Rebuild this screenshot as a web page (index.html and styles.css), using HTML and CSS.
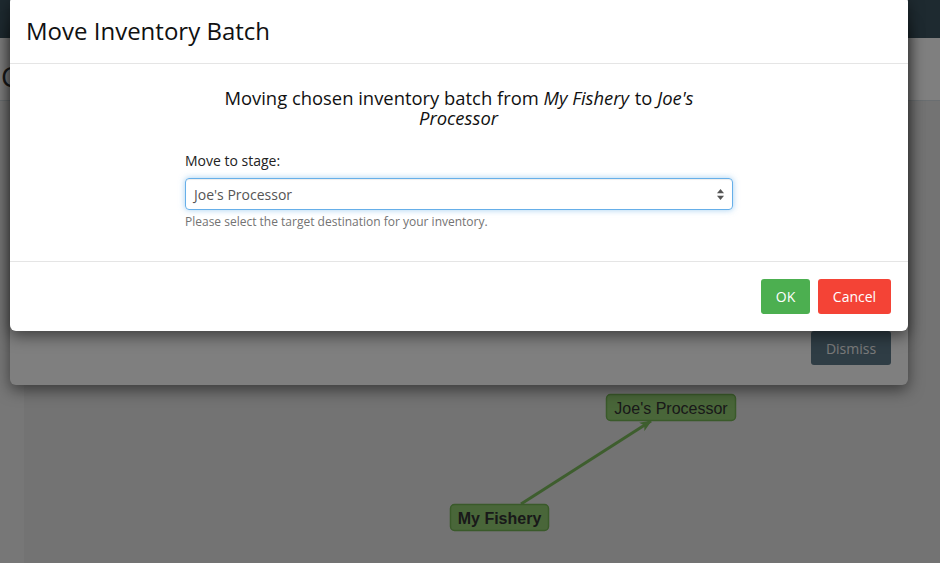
FILE: index.html
```html
<!DOCTYPE html>
<html lang="en">
<head>
<meta charset="utf-8">
<title>Move Inventory Batch</title>
<link rel="stylesheet" href="styles.css">
</head>
<body>
<div class="app">
  <header class="navbar"></header>
  <div class="page-header"><h1 class="page-title">Chain of Custody</h1></div>
  <div class="main">
    <aside class="sidebar"></aside>
    <section class="canvas">
      <svg class="graph" width="916" height="462" viewBox="0 0 916 462">
        <defs>
          <marker id="arrow" markerWidth="12" markerHeight="10" refX="11" refY="5" orient="auto" markerUnits="userSpaceOnUse">
            <path d="M0,0 L12,5 L0,10 L3,5 Z" fill="#7cbc5c"/>
          </marker>
        </defs>
        <line x1="497" y1="403" x2="627" y2="320" stroke="#7cbc5c" stroke-width="3" marker-end="url(#arrow)"/>
        <rect x="582.5" y="293.5" width="129" height="26" rx="4" class="node"/>
        <text x="647" y="313" class="node-label">Joe's Processor</text>
        <rect x="426.5" y="403.5" width="98" height="26" rx="4" class="node"/>
        <text x="475.5" y="423" class="node-label bold">My Fishery</text>
      </svg>
    </section>
  </div>
</div>

<div class="modal back-modal">
  <div class="back-footer">
    <button class="btn btn-dismiss" type="button">Dismiss</button>
  </div>
</div>

<div class="backdrop"></div>

<div class="modal front-modal">
  <div class="modal-header">
    <h2 class="modal-title">Move Inventory Batch</h2>
  </div>
  <div class="modal-body">
    <div class="form-col">
      <p class="lead">Moving chosen inventory batch from <em>My Fishery</em> to <em>Joe's Processor</em></p>
      <label class="field-label">Move to stage:</label>
      <div class="select">
        <span class="select-value">Joe's Processor</span>
        <svg class="select-arrows" width="7" height="11" viewBox="0 0 7 11">
          <path d="M3.5 0 L7 4.2 L0 4.2 Z" fill="#555"/>
          <path d="M3.5 11 L7 6.8 L0 6.8 Z" fill="#555"/>
        </svg>
      </div>
      <p class="help">Please select the target destination for your inventory.</p>
    </div>
  </div>
  <div class="modal-footer">
    <button class="btn btn-ok" type="button">OK</button>
    <button class="btn btn-cancel" type="button">Cancel</button>
  </div>
</div>
</body>
</html>
```

FILE: styles.css
```css
* { box-sizing: border-box; }
html, body { margin: 0; padding: 0; }
body {
  width: 940px;
  height: 563px;
  overflow: hidden;
  position: relative;
  font-family: "Open Sans", "Liberation Sans", sans-serif;
  background: #e6e6e6;
}

.app { display: flex; flex-direction: column; height: 563px; }
.navbar { height: 38px; background: #3c5460; flex: none; }
.page-header {
  height: 63px;
  flex: none;
  background: #ffffff;
  border-bottom: 1px solid #d4dde2;
  display: flex;
  align-items: center;
}
.page-title {
  margin: 0 0 0 1px;
  font-size: 28px;
  font-weight: 400;
  color: #333;
  white-space: nowrap;
  padding-top: 14px;
}
.main { flex: 1; display: flex; }
.sidebar { width: 24px; background: #eeeeee; flex: none; }
.canvas { flex: 1; background: #e6e6e6; overflow: hidden; }
.graph { display: block; }
.node { fill: #92cc72; stroke: #74b454; stroke-width: 1.5; }
.node-label {
  font-family: "Liberation Sans", Arial, sans-serif;
  font-size: 16px;
  fill: #333;
  text-anchor: middle;
}
.node-label.bold { font-weight: 700; }

.modal {
  position: absolute;
  left: 10px;
  width: 898px;
  background: #fff;
  border-radius: 6px;
  box-shadow: 0 5px 15px rgba(0, 0, 0, 0.5);
}
.back-modal { top: 20px; height: 365px; display: flex; flex-direction: column; justify-content: flex-end; }
.back-footer { display: flex; justify-content: flex-end; padding: 0 17px 20px; }

.backdrop { position: absolute; inset: 0; background: rgba(0, 0, 0, 0.5); }

.front-modal { top: -4px; }
.modal-header {
  height: 68px;
  border-bottom: 1px solid #e5e5e5;
  padding: 0 16px;
  display: flex;
  align-items: center;
}
.modal-title {
  margin: 0;
  font-size: 24px;
  font-weight: 400;
  color: #111;
  padding-top: 2px;
}
.modal-body { padding: 24px 0 31px; }
.form-col { width: 548px; margin: 0 auto; }
.lead {
  margin: 0;
  padding: 0 12px;
  text-align: center;
  font-size: 18.4px;
  line-height: 20px;
  color: #111;
}
.lead em { padding-right: 1px; }
.field-label {
  display: block;
  margin-top: 24px;
  font-size: 14px;
  line-height: 18px;
  color: #222;
}
.select {
  margin-top: 8px;
  height: 32px;
  border: 1px solid #66afe9;
  border-radius: 4px;
  box-shadow: inset 0 1px 1px rgba(0,0,0,.075), 0 0 6px rgba(102,175,233,.6);
  display: flex;
  align-items: center;
  justify-content: space-between;
  padding: 0 8px 0 8px;
}
.select-value { font-size: 14px; color: #555; }
.select-arrows { display: block; }
.help {
  margin: 4px 0 0;
  font-size: 12px;
  line-height: 16px;
  color: #737373;
}
.modal-footer {
  border-top: 1px solid #e5e5e5;
  padding: 17px 17px 17px;
  display: flex;
  justify-content: flex-end;
  gap: 8px;
}
.btn {
  font-family: "Open Sans", "Liberation Sans", sans-serif;
  font-size: 14px;
  color: #fff;
  border: 0;
  border-radius: 3px;
  height: 35px;
  padding: 0 12px;
  cursor: pointer;
}
.btn-ok { background: #4caf50; width: 49px; padding: 0; }
.btn-cancel { background: #f44336; width: 73px; padding: 0; }
.btn-dismiss { background: #5e7a8a; color: #f4f4f4; width: 80px; height: 34px; padding: 0; }
```
